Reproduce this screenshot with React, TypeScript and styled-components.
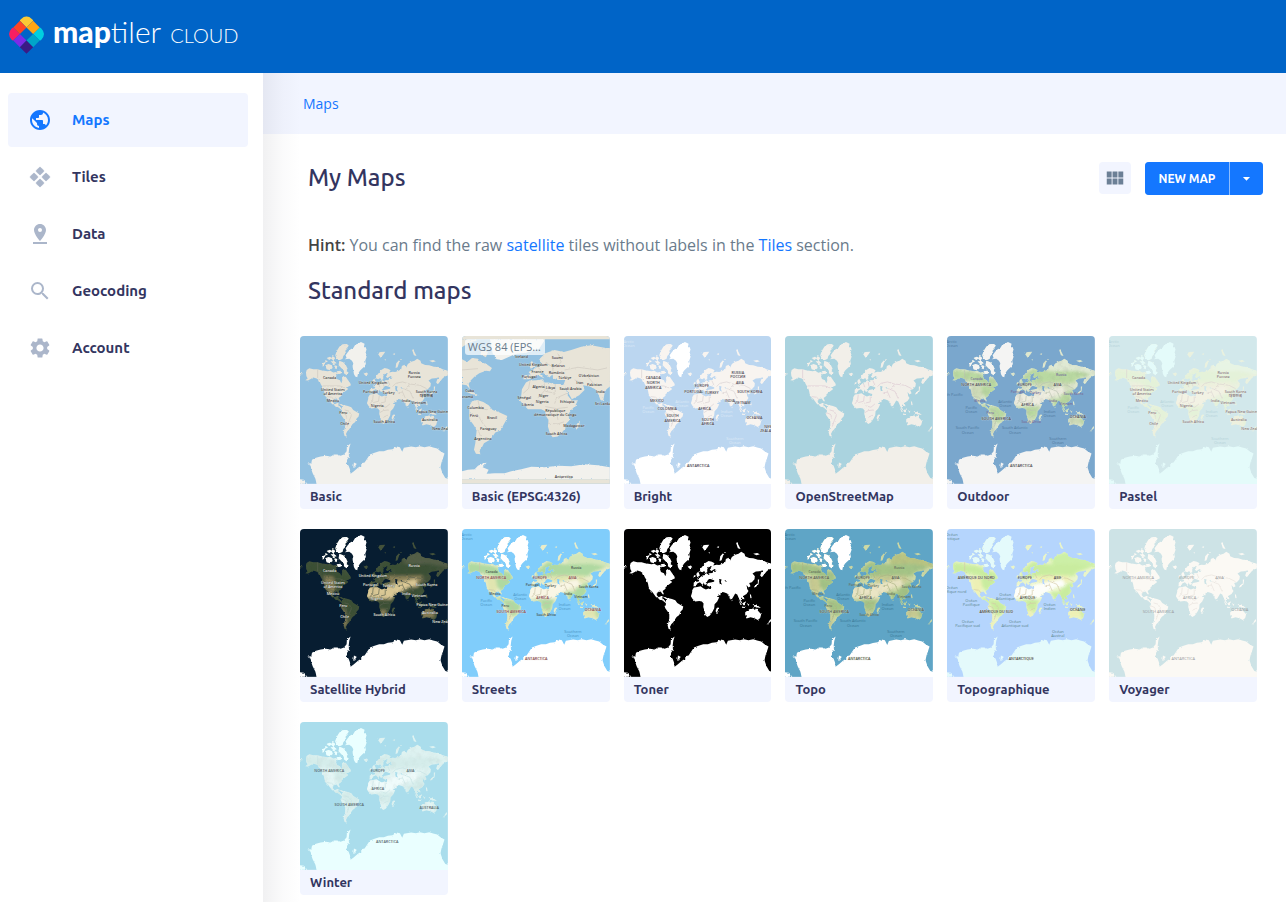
import React from "react";
import styled, { createGlobalStyle, css } from "styled-components";
import { MdPublic, MdPinDrop, MdSearch, MdSettings, MdViewModule, MdArrowDropDown } from "react-icons/md";

const colors = {
  brand: "#0064c7",
  accent: "#1477ff",
  ink: "#33355f",
  panel: "#f2f5ff",
  muted: "#abb6ca",
  body: "#6a7b8c",
};

const display = `Ubuntu, "Noto Sans", "Open Sans", sans-serif`;
const text = `"Open Sans", "Noto Sans", sans-serif`;

const GlobalStyle = createGlobalStyle`
  * { box-sizing: border-box; }
  body { margin: 0; background: #fff; font-family: ${text}; color: ${colors.body}; }
  a { color: ${colors.accent}; text-decoration: none; }
`;

const edgeShade = css`
  background-image: linear-gradient(to right, rgba(40, 40, 60, 0.065), rgba(40, 40, 60, 0.02) 20px, transparent 38px);
`;

const Page = styled.div`
  min-height: 100vh;
  display: flex;
  flex-direction: column;
`;

const Header = styled.header`
  height: 73px;
  padding: 0 9px 2px;
  background: ${colors.brand};
  display: flex;
  align-items: center;
`;

const Brand = styled.a`
  display: flex;
  align-items: center;
  gap: 9px;
  && { color: #fff; }
  svg { display: block; }
`;

const Wordmark = styled.span`
  display: flex;
  align-items: baseline;
  padding-bottom: 6px;
  font-family: Lato, sans-serif;
  font-size: 30px;
  line-height: 38px;
  font-weight: 300;
  b { font-weight: 900; }
  small { font-size: 20px; margin-left: 9px; }
`;

const Body = styled.div`
  flex: 1;
  display: flex;
`;

const Sidebar = styled.nav`
  width: 263px;
  flex: none;
  padding: 20px 15px 20px 8px;
`;

const NavList = styled.ul`
  list-style: none;
  margin: 0;
  padding: 0;
  display: flex;
  flex-direction: column;
  gap: 3px;
`;

const NavLink = styled.a<{ $active?: boolean }>`
  height: 54px;
  padding: 0 20px;
  display: flex;
  align-items: center;
  gap: 20px;
  border-radius: 4px;
  font-family: ${display};
  font-size: 15px;
  line-height: 16px;
  font-weight: 600;
  && { color: ${(p) => (p.$active ? colors.accent : colors.ink)}; }
  background: ${(p) => (p.$active ? colors.panel : "transparent")};
  svg { flex: none; color: ${(p) => (p.$active ? colors.accent : colors.muted)}; }
`;

const Main = styled.main`
  flex: 1;
  min-width: 0;
  display: flex;
  flex-direction: column;
`;

const Breadcrumb = styled.div`
  height: 61px;
  padding: 0 40px;
  display: flex;
  align-items: center;
  font-size: 14px;
  background-color: ${colors.panel};
  ${edgeShade}
`;

const Content = styled.div`
  flex: 1;
  padding: 28px 23px 0 45px;
  ${edgeShade}
`;

const TitleRow = styled.div`
  display: flex;
  align-items: flex-start;
  justify-content: space-between;
  height: 33px;
`;

const Heading = styled.h2`
  margin: 0;
  font-family: ${display};
  font-size: 24px;
  line-height: 32px;
  font-weight: 500;
  color: ${colors.ink};
`;

const Actions = styled.div`
  display: flex;
  gap: 14px;
`;

const ViewButton = styled.button`
  width: 32px;
  height: 32px;
  padding: 0;
  border: 0;
  border-radius: 4px;
  background: ${colors.panel};
  color: #6c8096;
  display: flex;
  align-items: center;
  justify-content: center;
`;

const SplitButton = styled.div`
  display: flex;
  gap: 1px;
  border-radius: 4px;
  overflow: hidden;
  background: #8dbdff;
`;

const SplitPart = styled.button<{ $width: number }>`
  width: ${(p) => p.$width}px;
  height: 33px;
  padding: 0;
  border: 0;
  background: ${colors.accent};
  color: #fff;
  font-family: ${display};
  font-size: 12px;
  font-weight: 600;
  white-space: nowrap;
  display: flex;
  align-items: center;
  justify-content: center;
`;

const Hint = styled.p`
  margin: 38px 0 18px;
  font-size: 16px;
  line-height: 24px;
  b { font-weight: 600; color: #444; }
`;

const Cards = styled.ul`
  list-style: none;
  margin: 29px 6px 0 -8px;
  padding: 0;
  display: grid;
  grid-template-columns: repeat(auto-fill, minmax(140px, 1fr));
  column-gap: 14px;
  row-gap: 20px;
`;

const Card = styled.a`
  position: relative;
  display: block;
  border-radius: 4px;
  overflow: hidden;
  background: ${colors.panel};
`;

const Caption = styled.span`
  display: block;
  padding: 0 10px;
  height: 25px;
  line-height: 24px;
  font-family: ${display};
  font-size: 13px;
  font-weight: 600;
  color: ${colors.ink};
`;

const Badge = styled.span`
  position: absolute;
  top: 3px;
  left: 3px;
  width: 80px;
  padding: 0 3px;
  border-radius: 3px;
  background: rgba(255, 255, 255, 0.7);
  color: ${colors.body};
  font-size: 11px;
  line-height: 16px;
  white-space: nowrap;
  overflow: hidden;
  text-overflow: ellipsis;
`;

const MapArt = styled.svg`
  display: block;
  width: 100%;
  aspect-ratio: 1;
  font-family: "Open Sans", "Noto Sans", "Noto Sans CJK KR", sans-serif;
`;

const SharedDefs = styled.svg`
  position: absolute;
  width: 0;
  height: 0;
`;

/* World outline in Web Mercator */
const NORTH_AMERICA =
  "M30,128L32,120 40,115 52,118 65,118 75,121 85,122 95,124 103,122 112,128 120,126 126,131 120,138 123,147 132,151 136,160 139,152 138,143 143,138 150,141 155,149 163,160 165,166 158,170 150,172 157,177 148,184 140,190 136,198 128,204 132,214 128,214 122,206 113,208 110,216 116,223 124,219 128,219 127,227 133,230 136,236 142,238 138,241 128,233 118,228 108,222 102,214 96,206 94,210 90,202 86,192 84,182 80,172 74,162 70,152 62,146 52,143 44,147 36,152 28,151 35,146 31,138Z";
const SOUTH_AMERICA =
  "M138,232L146,226 156,228 166,232 172,240 182,246 190,251 188,260 182,266 178,276 170,282 165,290 160,298 154,304 150,312 153,320 146,318 143,308 146,296 148,284 148,274 142,264 136,256 134,250 138,242Z";
const GREENLAND =
  "M146,88L152,84 149,76 156,66 164,58 172,54 178,44 186,41 195,36 206,41 204,50 212,57 209,68 212,80 208,92 210,102 204,111 198,116 192,122 186,132 184,142 178,140 174,132 172,120 170,110 172,100 168,92 160,86Z";
const ARCTIC =
  "M122,86L118,76 122,64 130,50 140,43 152,42 158,46 154,56 148,62 150,70 142,78 140,86 132,90ZM130,92L142,97 150,106 155,116 150,122 158,128 152,136 144,130 144,122 136,114 128,106ZM88,106L98,102 108,106 110,114 102,121 92,118ZM80,100L88,96 86,106 80,110ZM92,84L102,80 108,84 100,90ZM110,78L118,84 112,92 106,86ZM104,94L116,94 122,100 112,102ZM116,106L124,108 122,118 115,114ZM122,124L134,122 136,131 126,132ZM88,90L96,94 88,98Z";
const EURASIA =
  "M220,190L222,178 236,176 238,171 230,168 240,164 248,158 256,156 258,150 264,154 268,151 278,150 280,144 290,143 284,138 277,143 270,146 268,140 276,130 268,130 262,138 262,148 256,150 253,144 247,148 241,146 240,140 248,130 256,120 266,114 276,116 284,121 280,128 290,125 298,126 308,122 316,118 318,108 326,104 330,114 336,102 346,95 356,92 364,86 374,92 376,100 388,105 400,106 414,110 428,111 440,118 456,122 456,137 447,140 440,146 434,153 426,163 421,158 424,149 430,142 418,145 408,146 398,152 405,160 404,169 396,178 388,180 392,190 386,194 380,186 382,198 386,204 380,213 370,219 374,229 368,228 364,223 363,232 368,243 362,238 357,226 352,215 346,212 340,222 334,232 328,222 322,212 312,208 304,207 300,216 290,221 284,222 278,210 273,200 274,192 266,190 260,187 264,180 276,178 284,176 276,171 266,170 262,174 260,184 255,186 250,178 246,172 251,180 248,186 240,178 232,182 228,190Z";
const AFRICA =
  "M218,200L222,194 232,192 242,190 250,196 258,200 266,197 276,201 280,210 286,220 298,223 292,236 284,244 283,256 278,266 270,278 262,282 256,276 254,264 250,252 251,242 246,236 238,234 226,236 218,228 213,220 216,210ZM290,256L296,252 294,263 290,270 287,264Z";
const AUSTRALIA =
  "M376,268L384,262 390,258 396,258 400,256 405,261 410,254 415,264 424,274 421,285 414,291 404,286 392,283 380,287 376,278Z";
const ISLANDS =
  "M229,153L235,146 240,158 232,163ZM222,158L227,156 226,162 221,162ZM203,131L213,128 217,133 208,137ZM245,70L254,66 268,65 262,74 254,83ZM299,114L301,100 310,90 319,86 310,97 305,112ZM348,58L354,62 362,78 354,76ZM400,92L412,90 420,94 410,97ZM402,194L406,186 414,182 414,170 418,170 416,184 408,192ZM356,232L366,246 362,246ZM368,241L378,235 376,246 370,248ZM382,242L388,240 386,250ZM398,243L410,245 423,255 408,253ZM390,212L394,218 396,230 391,224ZM366,250L378,253 372,256ZM440,306L446,298 452,288 454,294 446,302ZM127,221L138,224 148,228 138,228ZM12,128L22,132 12,134ZM290,72L298,70 296,75ZM266,88L270,88 268,92ZM335,228L338,232 336,235Z";
const ANTARCTICA =
  "M34,402L46,400 48,390 60,384 74,380 90,378 104,380 114,374 124,374 134,378 144,374 152,364 153,350 164,341 160,354 158,370 160,380 152,392 152,402 158,408 162,418 164,432 174,424 186,414 196,408 196,400 206,398 214,386 222,374 236,369 250,364 264,364 276,360 290,358 302,350 312,352 319,366 324,354 346,350 360,352 372,349 386,352 400,349 412,353 424,356 434,364 446,371 442,384 437,398 434,412 440,430 448,444 456,450 456,462 62,462 58,446 50,430 46,418 44,408ZM174,398L182,402 178,412 172,414ZM12,448L24,450 34,462 12,462Z";
const LAND = [NORTH_AMERICA, SOUTH_AMERICA, ARCTIC, EURASIA, AFRICA, AUSTRALIA, ISLANDS].join("");
const SEAS = "M264,171L272,168 284,173 278,177 266,177ZM299,168L305,170 303,177 306,185 300,184 298,176ZM314,172L318,172 317,177ZM268,138L274,132 270,144 263,152Z";
const BORDERS =
  "M65,118L65,144 72,150M80,168L132,168 148,174M92,200L108,202 114,210M146,240L160,244 166,258 160,272 154,290M136,248L150,254 152,266M232,194L230,212 222,222M250,198L248,214 232,218M268,200L268,216 250,220M282,222L270,232 256,228M278,240L262,242 252,248M276,256L262,262M248,162L252,172M262,156L264,170M276,152L282,166M290,170L300,160 320,156 340,162 372,166 392,176M322,176L342,184 352,206M306,190L320,186 328,204M340,164L330,180";

/* Atlantic view in plate carrée */
const FLAT_LAND =
  "M204,158L215,152 235,151 255,148 260,158 272,158 290,162 305,162 318,164 325,180 332,200 342,212 360,211 352,228 340,240 332,252 334,272 324,282 322,296 312,308 300,320 284,322 276,310 270,290 272,270 264,258 262,244 250,238 232,238 210,238 198,226 186,212 190,196 192,178ZM34,228L42,214 58,210 76,216 92,226 104,240 122,246 148,258 144,272 136,286 128,302 112,308 102,322 92,332 78,340 72,352 64,362 68,373 54,372 48,360 52,340 54,320 56,300 46,284 34,268 34,250ZM12,88L28,96 42,84 60,86 68,98 82,100 102,114 96,124 84,122 64,130 50,140 38,152 32,162 36,178 26,166 12,164ZM196,148L200,136 218,134 212,126 228,118 240,110 250,98 244,88 262,70 290,60 318,66 340,60 370,50 400,46 456,56 456,170 446,178 440,190 436,214 428,210 420,190 412,178 396,170 376,166 380,180 364,196 342,208 334,194 324,176 318,162 322,150 300,150 286,146 284,134 272,144 266,136 254,128 246,132 260,146 240,136 228,140 214,148ZM214,104L222,92 232,110 218,116ZM356,284L366,272 364,290 354,300ZM22,184L48,188 60,196 40,192ZM12,52L30,40 60,30 12,28ZM70,60L90,66 84,82 68,74Z";
const FLAT_ICE = "M96,28L262,28 244,56 205,68 172,72 132,90 116,88 104,70Z";
const FLAT_SOUTH =
  "M12,424L30,420 50,418 60,408 76,400 86,399 74,412 92,420 86,432 110,430 140,430 160,424 190,418 220,411 260,412 300,408 340,409 380,403 420,406 456,412 456,449 12,449Z";
const FLAT_BORDERS =
  "M60,212L66,236 90,240M36,252L60,256 74,280 92,300M60,300L72,330M216,154L212,176 196,190M258,158L262,180 240,204M292,162L292,190 262,184M328,190L296,204 290,222M262,230L296,236 330,232M270,280L300,282 318,276M296,240L300,270M240,112L256,128M262,98L284,110 286,130M300,70L310,96 296,112M320,120L360,112 420,120 456,112M350,150L376,160M390,140L410,164M12,120L60,116";

type Label = [string, number, number];
const COUNTRY_LABELS: Label[] = [
  ["Canada", 101, 148], ["United States", 111, 184], ["of America", 111, 195], ["Mexico", 111, 215],
  ["Peru", 142, 251], ["Chile", 146, 284], ["United Kingdom", 231, 162], ["Portugal", 224, 189],
  ["Turkey", 278, 191], ["Nigeria", 244, 231], ["South Africa", 265, 280], ["Russia", 355, 132],
  ["Россия", 355, 144], ["South Korea", 392, 189], ["대한민국", 392, 201], ["India", 331, 215],
  ["Vietnam", 369, 221], ["Papua New Guinea", 412, 250], ["Australia", 402, 274], ["New Zealand", 444, 299],
];
const SATELLITE_LABELS = COUNTRY_LABELS.filter(([name]) => name !== "Россия" && name !== "대한민국");
const FLAT_LABELS: Label[] = [
  ["Iceland", 191, 84], ["United Kingdom", 226, 108], ["Suomi", 298, 88], ["Belarus", 301, 111],
  ["France", 239, 129], ["România", 296, 131], ["Portugal", 214, 145], ["Türkiye", 321, 147],
  ["O‘zbekiston", 393, 142], ["Iran", 366, 162], ["Pakistan", 410, 168], ["India", 428, 188],
  ["Saudi Arabia", 338, 180], ["Algeria", 242, 175], ["Libya", 278, 177], ["Niger", 257, 200],
  ["Sénégal", 199, 208], ["Nigeria", 253, 220], ["Liberia", 210, 229], ["Ethiopia", 328, 218],
  ["République", 292, 245], ["démocratique du Congo", 292, 257], ["Madagascar", 348, 290],
  ["South Africa", 296, 314], ["Colombia", 53, 236], ["Perú", 48, 260], ["Brasil", 102, 268],
  ["Paraguay", 91, 300], ["Argentina", 75, 329], ["Cuba", 35, 187], ["Panamá", 24, 205],
  ["Sri Lanka", 436, 225], ["Antarctica", 318, 444],
];
const continents = (na: string, sa: string, eu: string, af: string, as: string, oc: string, an: string): Label[] => [
  [na, 100, 169], [sa, 160, 269], [eu, 246, 169], [af, 254, 229], [as, 344, 169], [oc, 405, 265], [an, 235, 410],
];
const ENGLISH = continents("NORTH AMERICA", "SOUTH AMERICA", "EUROPE", "AFRICA", "ASIA", "OCEANIA", "ANTARCTICA");
const FRENCH = continents("AMÉRIQUE DU NORD", "AMÉRIQUE DU SUD", "EUROPE", "AFRIQUE", "ASIE", "OCÉANIE", "ANTARCTIQUE");
const BRIGHT_LABELS: Label[] = [
  ["CANADA", 100, 148], ["NORTH", 100, 163], ["AMERICA", 100, 178], ["MEXICO", 111, 215], ["COLOMBIA", 142, 239],
  ["SOUTH", 158, 262], ["AMERICA", 158, 277], ["EUROPE", 246, 170], ["PORTUGAL", 222, 189], ["TURKEY", 276, 191],
  ["AFRICA", 254, 241], ["SOUTH", 264, 274], ["AFRICA", 264, 286], ["RUSSIA", 354, 132], ["РОССИЯ", 354, 144],
  ["ASIA", 360, 161], ["SOUTH KOREA", 390, 189], ["VIETNAM", 368, 221], ["INDIA", 330, 215], ["OCEANIA", 404, 266],
  ["ANTARCTICA", 235, 411], ["NEW", 446, 294], ["ZEALAND", 446, 305],
];
const COUNTRIES_MINOR: Label[] = [
  ["Canada", 101, 149], ["Mexico", 111, 216], ["Peru", 142, 251], ["Portugal", 224, 189], ["Turkey", 278, 191],
  ["South Africa", 265, 280], ["Russia", 355, 138], ["South Korea", 392, 195], ["India", 331, 215], ["Vietnam", 369, 226],
];
const OCEANS: Label[] = [
  ["Arctic", 26, 39], ["Ocean", 26, 51], ["Atlantic", 187, 218], ["Ocean", 187, 230], ["Pacific", 85, 237], ["Ocean", 85, 249],
  ["Indian", 320, 249], ["Ocean", 320, 261], ["Southern", 345, 329], ["Ocean", 345, 341],
];
const SOUTH_OCEANS: Label[] = [
  ["North Pacific", 24, 197], ["South Pacific", 74, 298], ["Ocean", 74, 311], ["South Atlantic", 216, 298], ["Ocean", 216, 311],
];
const OCEANS_FR: Label[] = [
  ["Océan", 26, 39], ["Arctique", 26, 51], ["Océan", 187, 218], ["Atlantique", 187, 230], ["Océan", 85, 237], ["Pacifique", 85, 249],
  ["Océan", 320, 249], ["Indien", 320, 261], ["Océan", 345, 331], ["Austral", 345, 343], ["Océan", 26, 197], ["Pacifique nord", 30, 209],
  ["Océan", 74, 299], ["Pacifique sud", 74, 311], ["Océan", 216, 299], ["Atlantique sud", 216, 311],
];
const WINTER_LABELS: Label[] = [
  ["NORTH AMERICA", 100, 169], ["SOUTH AMERICA", 160, 269], ["EUROPE", 246, 169], ["AFRICA", 246, 221],
  ["ASIA", 344, 169], ["AUSTRALIA", 400, 279], ["ANTARCTICA", 274, 380],
];

interface Biomes { forest: string; desert: string; steppe: string; tundra: string; opacity: number }
interface LabelSet { items: Label[]; color: string; size: number; weight?: number; halo?: string }
interface MapStyle {
  name: string;
  water: string;
  land: string;
  ice: string;
  border?: string;
  biomes?: Biomes;
  relief?: number;
  labels: LabelSet[];
  flat?: boolean;
  badge?: string;
}

const MAPS: MapStyle[] = [
  { name: "Basic", water: "#93c1e1", land: "#e8e4d8", ice: "#f2f1ed", border: "#cfc9c0",
    labels: [{ items: COUNTRY_LABELS, color: "#3d3d42", size: 11, weight: 600, halo: "#f4f2ea" }] },
  { name: "Basic (EPSG:4326)", water: "#93c1e1", land: "#e8e4d8", ice: "#f2f1ed", border: "#cfc9c0", flat: true,
    badge: "WGS 84 (EPSG:4326)", labels: [{ items: FLAT_LABELS, color: "#3d3d42", size: 11, weight: 600, halo: "#f4f2ea" }] },
  { name: "Bright", water: "#bbd6f0", land: "#f8f4f0", ice: "#ffffff", border: "#d9d2d3",
    labels: [{ items: BRIGHT_LABELS, color: "#4a4650", size: 11, weight: 600, halo: "#f8f6f4" }, { items: OCEANS, color: "#dce9f7", size: 12 }] },
  { name: "OpenStreetMap", water: "#aad3df", land: "#f2efe9", ice: "#f2efe9", border: "#dcc9d2", labels: [] },
  { name: "Outdoor", water: "#7aa7cd", land: "#dfe8cf", ice: "#f4f4f3", border: "#b9c2b0", relief: 0.2,
    biomes: { forest: "#b3d699", desert: "#f0ede2", steppe: "#cbd9b4", tundra: "#e0e9d4", opacity: 0.85 },
    labels: [
      { items: ENGLISH, color: "#47474b", size: 11, weight: 600, halo: "#f2f2ec" },
      { items: COUNTRIES_MINOR, color: "#77709b", size: 10, weight: 600 },
      { items: [...OCEANS, ...SOUTH_OCEANS], color: "#50799f", size: 12 },
    ] },
  { name: "Pastel", water: "#d2e8eb", land: "#eaf1df", ice: "#e4fbfa", border: "#ddd5d2",
    biomes: { forest: "#e2f2d6", desert: "#f6f2e6", steppe: "#f0efdd", tundra: "#e6f5e6", opacity: 0.7 },
    labels: [
      { items: COUNTRY_LABELS, color: "#8b7d80", size: 11, weight: 600, halo: "#f3f3ec" },
      { items: OCEANS, color: "#b5d3da", size: 12 },
    ] },
  { name: "Satellite Hybrid", water: "#071d31", land: "#44523a", ice: "#ffffff", border: "#59614e", relief: 0.1,
    biomes: { forest: "#3a5036", desert: "#ecd5a0", steppe: "#94875c", tundra: "#56604a", opacity: 0.9 },
    labels: [{ items: SATELLITE_LABELS, color: "#e6e9e6", size: 11, weight: 600, halo: "#273226" }] },
  { name: "Streets", water: "#80cdfb", land: "#e9ecc9", ice: "#ffffff", border: "#c9c2a8",
    biomes: { forest: "#a5d69a", desert: "#fcf8ea", steppe: "#dfe4ac", tundra: "#cfe5b6", opacity: 0.85 },
    labels: [
      { items: ENGLISH, color: "#874a4a", size: 11, weight: 600, halo: "#eee8dd" },
      { items: COUNTRIES_MINOR, color: "#47514c", size: 10, weight: 600 },
      { items: OCEANS, color: "#4a94c6", size: 12 },
    ] },
  { name: "Toner", water: "#000000", land: "#ffffff", ice: "#ffffff", labels: [] },
  { name: "Topo", water: "#5fa5c6", land: "#cdd9a5", ice: "#ffffff", border: "#aab284", relief: 0.15,
    biomes: { forest: "#9dc081", desert: "#efe7c9", steppe: "#c6c88e", tundra: "#b5c07c", opacity: 0.85 },
    labels: [
      { items: ENGLISH, color: "#505649", size: 11, weight: 600, halo: "#dee3c9" },
      { items: COUNTRIES_MINOR, color: "#66725d", size: 10, weight: 600 },
      { items: [...OCEANS, ...SOUTH_OCEANS], color: "#397795", size: 12 },
    ] },
  { name: "Topographique", water: "#b5d5fd", land: "#eaf5c9", ice: "#e4fafb", border: "#d4c9a8",
    biomes: { forest: "#c6ec9b", desert: "#ffffff", steppe: "#eef0b3", tundra: "#c9efa2", opacity: 0.9 },
    labels: [
      { items: FRENCH, color: "#444", size: 11, weight: 600, halo: "#eff4de" },
      { items: OCEANS_FR, color: "#5e8790", size: 12 },
    ] },
  { name: "Voyager", water: "#cde3e6", land: "#fbf9f4", ice: "#fbf9f4", border: "#e9e2dd",
    labels: [{ items: ENGLISH, color: "#999ba0", size: 12 }] },
  { name: "Winter", water: "#aaddec", land: "#dff3f2", ice: "#eaffff", border: "#c7e3e4", relief: 0.1,
    biomes: { forest: "#d3ebe9", desert: "#f3fdfd", steppe: "#e5f6f5", tundra: "#def2f0", opacity: 0.8 },
    labels: [{ items: WINTER_LABELS, color: "#55666b", size: 11, weight: 600 }] },
];

function MapDefs() {
  return (
    <SharedDefs aria-hidden="true">
      <defs>
        <filter id="coast" filterUnits="userSpaceOnUse" x="0" y="0" width="470" height="480" colorInterpolationFilters="sRGB">
          <feTurbulence type="fractalNoise" baseFrequency="0.12" numOctaves="2" seed="4" />
          <feDisplacementMap in="SourceGraphic" scale="7" xChannelSelector="R" yChannelSelector="G" />
        </filter>
        <filter id="soft"><feGaussianBlur stdDeviation="4" /></filter>
        <filter id="terrain" filterUnits="userSpaceOnUse" x="0" y="0" width="470" height="480">
          <feTurbulence type="fractalNoise" baseFrequency="0.05" numOctaves="3" seed="9" />
          <feColorMatrix values="0 0 0 0 0.2  0 0 0 0 0.22  0 0 0 0 0.2  1.6 0 0 0 -0.7" />
        </filter>
        <clipPath id="land-clip"><path d={LAND} /></clipPath>
      </defs>
    </SharedDefs>
  );
}

function BiomePatches({ b }: { b: Biomes }) {
  return (
    <g clipPath="url(#land-clip)" opacity={b.opacity}>
      <g filter="url(#soft)">
        <path fill={b.forest} d="M28,118L100,128 160,150 166,176 132,206 116,190 112,160 70,150 30,152Z" />
        <path fill={b.steppe} d="M84,160L112,162 118,192 108,222 90,200Z" />
        <path fill={b.forest} d="M108,222L134,226 142,242 126,236Z" />
        <path fill={b.forest} d="M136,230L170,232 190,250 176,276 160,280 146,256Z" />
        <path fill={b.steppe} d="M134,246L148,268 154,300 142,318 140,272Z" />
        <path fill={b.forest} d="M240,140L270,116 320,124 400,120 450,130 400,150 390,160 330,158 280,160 232,170Z" />
        <path fill={b.tundra} d="M318,100L374,86 456,116 456,134 400,122 330,124Z" />
        <path fill={b.steppe} d="M276,160L380,158 380,176 340,186 300,180 274,172Z" />
        <path fill={b.forest} d="M216,228L290,226 282,252 276,272 254,262 248,238Z" />
        <path fill={b.steppe} d="M250,262L270,260 268,284 256,280Z" />
        <path fill={b.forest} d="M322,206L346,208 362,190 392,176 386,208 374,244 360,240 336,232Z" />
        <path fill={b.desert} d="M204,188L282,194 308,208 286,228 208,226Z" />
        <path fill={b.desert} d="M266,186L320,176 360,168 368,190 340,194 312,208 286,224Z" />
        <path fill={b.steppe} d="M376,262L408,256 420,280 410,284 378,284Z" />
        <path fill={b.forest} d="M404,252L426,270 418,292 414,270Z" />
      </g>
    </g>
  );
}

function WorldMap({ map }: { map: MapStyle }) {
  return (
    <MapArt viewBox="12 18 444 444" preserveAspectRatio="none" role="img" aria-label={`${map.name} preview`}>
      <rect x="12" y="18" width="444" height="444" fill={map.water} />
      {map.flat ? (
        <>
          <g filter="url(#coast)">
            <path d={FLAT_LAND} fill={map.land} />
            <path d={FLAT_ICE} fill={map.ice} />
            <path d={FLAT_SOUTH} fill={map.ice} />
            <path d={FLAT_BORDERS} fill="none" stroke={map.border} strokeWidth="2" />
          </g>
          <path d="M12,18H456V28H12ZM12,448H456V462H12ZM444,54H456V170H450Z" fill={map.land} />
        </>
      ) : (
        <g filter="url(#coast)">
          <path d={LAND} fill={map.land} />
          {map.biomes && <BiomePatches b={map.biomes} />}
          {map.relief && (
            <g clipPath="url(#land-clip)" opacity={map.relief}>
              <rect x="12" y="18" width="444" height="330" filter="url(#terrain)" />
            </g>
          )}
          {map.biomes && <path d={ARCTIC} fill={map.ice} />}
          <path d={GREENLAND + ANTARCTICA} fill={map.ice} />
          <path d="M62,446H470V480H62Z" fill={map.ice} />
          <path d={SEAS} fill={map.water} />
          {map.border && <path d={BORDERS} fill="none" stroke={map.border} strokeWidth="2" />}
        </g>
      )}
      {map.labels.map((set, i) => (
        <g key={i} textAnchor="middle" fontSize={set.size} fontWeight={set.weight ?? 400} fill={set.color}
          stroke={set.halo} strokeWidth={set.halo ? 2 : 0} strokeOpacity="0.5" paintOrder="stroke">
          {set.items.map(([label, x, y], j) => (
            <text key={j} x={x} y={y}>{label}</text>
          ))}
        </g>
      ))}
    </MapArt>
  );
}

function PinLogo() {
  const cells: [string, string][] = [
    ["#fbc935", "M33,14V-6H73V14L53,34Z"],
    ["#f81f61", "M13,34H-7V74H13L33,54Z"],
    ["#00cfe0", "M93,34H113V74H93L73,54Z"],
    ["#ff4424", "M33,14L53,34 33,54 13,34Z"],
    ["#ffa514", "M73,14L93,34 73,54 53,34Z"],
    ["#7d2be8", "M33,54L53,74 33,94 13,74Z"],
    ["#00a5c9", "M73,54L93,74 73,94 53,74Z"],
    ["#3b1a85", "M53,74L73,94 53,114 33,94Z"],
  ];
  return (
    <svg width="35" height="39" viewBox="0 0 106 117" aria-hidden="true">
      <clipPath id="pin"><path d="M53,116L8,71Q-8,54 8,37L36,9Q53,-8 70,9L98,37Q114,54 98,71Z" /></clipPath>
      <g clipPath="url(#pin)">
        {cells.map(([fill, d]) => <path key={fill} fill={fill} d={d} />)}
      </g>
    </svg>
  );
}

function TilesIcon() {
  return (
    <svg width="24" height="24" viewBox="0 0 24 24" fill="currentColor" aria-hidden="true">
      {[[12, 6], [6, 12], [18, 12], [12, 18]].map(([x, y]) => (
        <rect key={`${x}-${y}`} x={x - 3} y={y - 3} width="6" height="6" rx="1" strokeWidth="0.6" stroke="currentColor"
          transform={`rotate(45 ${x} ${y})`} />
      ))}
    </svg>
  );
}

const NAV = [
  { label: "Maps", icon: <MdPublic size={24} />, active: true },
  { label: "Tiles", icon: <TilesIcon /> },
  { label: "Data", icon: <MdPinDrop size={24} /> },
  { label: "Geocoding", icon: <MdSearch size={24} /> },
  { label: "Account", icon: <MdSettings size={24} /> },
];

export default function App() {
  return (
    <Page>
      <GlobalStyle />
      <MapDefs />
      <Header>
        <Brand href="#">
          <PinLogo />
          <Wordmark><b>map</b>tiler<small>CLOUD</small></Wordmark>
        </Brand>
      </Header>
      <Body>
        <Sidebar aria-label="Main">
          <NavList>
            {NAV.map((item) => (
              <li key={item.label}>
                <NavLink href="#" $active={item.active}>
                  {item.icon}
                  {item.label}
                </NavLink>
              </li>
            ))}
          </NavList>
        </Sidebar>
        <Main>
          <Breadcrumb><a href="#">Maps</a></Breadcrumb>
          <Content>
            <TitleRow>
              <Heading as="h1">My Maps</Heading>
              <Actions>
                <ViewButton type="button" aria-label="Grid view"><MdViewModule size={22} /></ViewButton>
                <SplitButton>
                  <SplitPart type="button" $width={84}>NEW MAP</SplitPart>
                  <SplitPart type="button" $width={33} aria-label="More options"><MdArrowDropDown size={17} /></SplitPart>
                </SplitButton>
              </Actions>
            </TitleRow>
            <Hint>
              <b>Hint:</b> You can find the raw <a href="#">satellite</a> tiles without labels in the <a href="#">Tiles</a> section.
            </Hint>
            <Heading>Standard maps</Heading>
            <Cards>
              {MAPS.map((map) => (
                <li key={map.name}>
                  <Card href="#">
                    <WorldMap map={map} />
                    {map.badge && <Badge>{map.badge}</Badge>}
                    <Caption>{map.name}</Caption>
                  </Card>
                </li>
              ))}
            </Cards>
          </Content>
        </Main>
      </Body>
    </Page>
  );
}
